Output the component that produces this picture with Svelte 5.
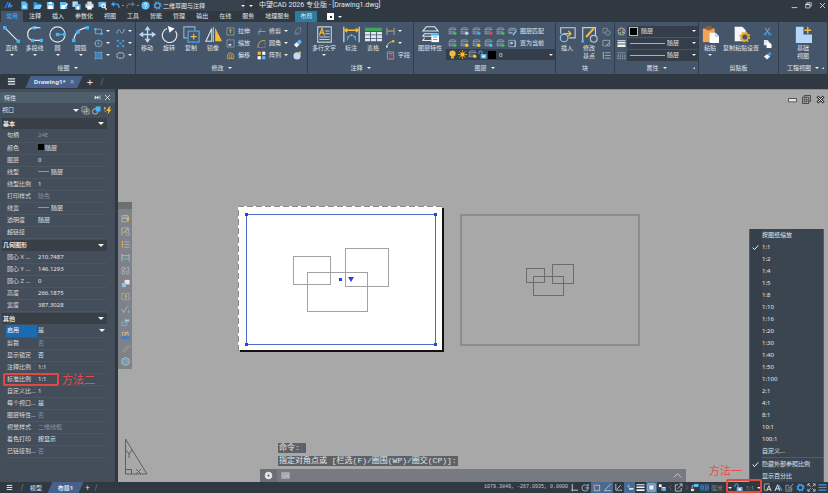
<script>
  let activeTab = $state('常用');
  let scale = $state('1:1');

  const tabs = ['常用', '注释', '插入', '参数化', '视图', '工具', '智能', '管理', '输出', '在线', '服务', '地理服务', '布局'];
  const quickIcons = ['newFile', 'open', 'save', 'saveAs', 'saveAll', 'print', 'preview'];

  const modifyRows = [
    ['stretch', '拉伸', 'trim', '修剪', 'explode'],
    ['scale', '缩放', 'fillet', '圆角', 'eraser'],
    ['offset', '偏移', 'array', '阵列', 'sphere']
  ];
  const layerRows = [
    { colors: ['#49b45c', '#b9d4ee', '#4aa3e8', '#e0484d', '#49b45c', '#8fc4f2'], icon: 'layerMatch', label: '图层匹配' },
    { colors: ['#49b45c', '#f2c230', '#f2c230', '#5ab4f0', '#49b45c', '#8fc4f2'], icon: 'layerSet', label: '置为当前' }
  ];

  const sections = [
    {
      title: '基本',
      rows: [
        { name: '句柄', value: '24E', dim: true },
        { name: '颜色', value: '随层', mark: 'swatch' },
        { name: '图层', value: '0' },
        { name: '线型', value: '随层', mark: 'line' },
        { name: '线型比例', value: '1' },
        { name: '打印样式', value: '随色', dim: true },
        { name: '线宽', value: '随层', mark: 'line' },
        { name: '透明度', value: '随层' },
        { name: '超链接', value: '' }
      ]
    },
    {
      title: '几何图形',
      rows: [
        { name: '圆心 X ...', value: '210.7487' },
        { name: '圆心 Y ...', value: '146.1293' },
        { name: '圆心 Z ...', value: '0' },
        { name: '高度', value: '266.1875' },
        { name: '宽度', value: '387.3028' }
      ]
    },
    {
      title: '其他',
      rows: [
        { name: '启用', value: '是', selected: true },
        { name: '剪裁', value: '否', dim: true },
        { name: '显示锁定', value: '否' },
        { name: '注释比例', value: '1:1' },
        { name: '标准比例', value: '1:1', note: '方法二' },
        { name: '自定义比...', value: '1' },
        { name: '每个视口...', value: '是' },
        { name: '图层特性...', value: '否', dim: true },
        { name: '视觉样式', value: '二维线框', dim: true },
        { name: '着色打印', value: '按显示' },
        { name: '已链接到...', value: '否', dim: true }
      ]
    }
  ];

  const scales = ['按图纸缩放', '1:1', '1:2', '1:4', '1:5', '1:8', '1:10', '1:16', '1:20', '1:30', '1:40', '1:50', '1:100', '2:1', '4:1', '8:1', '10:1', '100:1', '自定义...'];
  const sideTools = ['layerBulb', 'basePoint', 'listTree', 'dimension', 'blocks', 'copyBlue', 'mirrorBox', 'root', 'windows', 'pdf', 'hatch', 'hexGear'];
  const toggles = [
    { icon: 'ortho', on: false },
    { icon: 'polar', on: false },
    { icon: 'snap', on: true },
    { icon: 'track', on: true },
    { icon: 'ucs', on: false },
    { icon: 'dyn', on: true },
    { icon: 'weight', on: false },
    { icon: 'model', on: true },
    { icon: 'cycle', on: false },
    { icon: 'less', on: false, thin: true },
    { icon: 'external', on: false },
    { icon: 'more', on: false, thin: true },
    { icon: 'quick', on: false }
  ];
  const statusTools = ['annoVis', 'annoAuto', 'workspace', 'gear', 'expand', 'menuBlue'];

  const W = '#dfe6ee';
  const B = '#42b4f5';
  const Y = '#f5bb35';
  const line = (d, c = W, w = 1.6) => `<path d="${d}" fill="none" stroke="${c}" stroke-width="${w}"/>`;
  const fill = (d, c = W) => `<path d="${d}" fill="${c}"/>`;
  const dot = (x, y, c = B, s = 4) => `<rect x="${x - s / 2}" y="${y - s / 2}" width="${s}" height="${s}" fill="${c}"/>`;
  const ring = (x, y, r, c = W, w = 1.6) => `<circle cx="${x}" cy="${y}" r="${r}" fill="none" stroke="${c}" stroke-width="${w}"/>`;
  const disc = (x, y, r, c = W) => `<circle cx="${x}" cy="${y}" r="${r}" fill="${c}"/>`;
  const gear = (x, y, r, c) =>
    `<circle cx="${x}" cy="${y}" r="${r}" fill="none" stroke="${c}" stroke-width="${r * 0.5}"/>` +
    `<circle cx="${x}" cy="${y}" r="${r * 1.38}" fill="none" stroke="${c}" stroke-width="${r * 0.5}" stroke-dasharray="${r * 0.54} ${r * 0.54}"/>`;
  const stack = (c) => line('M5 2h10l3 4H2zM3 8l-1 3h12M3 12l-1 3h9', '#aab9c9', 1.5) + disc(15, 14, 4, c);

  const icons = {
    logo: fill('M1 16L7 2l3 1-6 13z', '#2f7bea') + line('M9 15l4-11 1 9 5-3', '#3f9cf5', 2.4),
    newFile: fill('M3 1h9l5 5v13H3z', '#5db9f5') + line('M6 11h8M6 15h8', '#fff', 2),
    open: fill('M1 3h7l2 3h8v4H5L1 17z', '#2d93e0') + fill('M5 9h15l-4 9H1z', '#7bcbfb'),
    save: fill('M2 2h13l3 3v13H2z', '#5db9f5') + fill('M5 10h10v8H5z', '#fff') + fill('M6 2h7v5H6z', '#e5f3fd'),
    saveAs: fill('M2 2h13l3 3v13H2z', '#5db9f5') + fill('M5 9h8v9H5z', '#fff') + line('M10 15l9-9', '#fff', 3),
    saveAll: fill('M1 1h12v12H1z', '#b9dcf5') + fill('M7 7h12v12H7z', '#5db9f5') + fill('M10 12h6v7h-6z', '#fff'),
    print: fill('M5 1h10v5H5zM1 6h18v9H1z', '#cfdbe6') + fill('M5 11h10v8H5z', '#fff') + line('M4 8h3', '#3f9cf5', 2),
    preview: fill('M1 2h17v11H1z', '#5db9f5') + ring(12, 11, 4, '#fff', 2.4) + line('M15 14l4 5', '#fff', 2.6),
    undo: line('M4 7h8q6 0 6 8', '#42a5f5', 3) + fill('M0 7l7-6v12z', '#42a5f5'),
    redo: line('M16 7H8q-6 0-6 8', '#68737e', 2.4) + fill('M20 7l-7-6v12z', '#68737e'),
    help: disc(10, 10, 9, '#5db9f5') + line('M7 8q0-3 3-3t3 3q0 2-3 3v2M10 15v2', '#fff', 2),
    gear: gear(10, 10, 5.5, '#42a5f5'),
    minimize: line('M2 16h16', W, 2.4),
    restore: line('M5 6V2h13v10h-4M2 6h12v11H2z', W, 2) + fill('M2 6h12v3H2z'),
    close: line('M3 3l14 14M17 3L3 17', W, 2.4),
    burger: line('M2 4h16M2 10h16M2 16h16', W, 2.8),
    menuBlue: line('M1 4h18M1 10h18M1 16h18', '#3d9be8', 2.6),

    line: line('M2 2l16 16', W, 1.4) + dot(2, 2) + dot(18, 18),
    polyline: line('M9 2Q2 3 2 10t8 7h8', W, 1.4) + dot(10, 2) + dot(8, 17) + dot(18, 17) + line('M10 2h7', W, 1.4),
    circle: ring(10, 10, 9, W, 1.3) + line('M10 10h9', B, 1.5) + dot(10, 10) + dot(18.5, 10),
    arc: line('M2 18Q3 4 18 2', W, 1.4) + dot(2, 17) + dot(7, 7) + dot(18, 2),
    rect: line('M3 5h14v10H3z', '#b6c4d2', 1.4) + dot(3, 5, B, 5) + dot(17, 15, B, 5),
    ellipse: `<ellipse cx="10" cy="10" rx="8" ry="7" fill="none" stroke="#b6c4d2" stroke-width="1.5"/>` + dot(10, 10) + dot(3, 10, B, 3) + dot(10, 3, B, 3),
    hatchFill: `<rect x="3" y="3" width="14" height="14" fill="#3c84bd"/>` + line('M1 3h18M1 17h18M3 1v18M17 1v18', '#7fa9cf', 1.4),
    spline: line('M2 12Q6 1 10 10t8-3', '#9fc3e2', 1.6) + dot(2, 13, B, 3) + dot(18, 6, B, 3),
    points: dot(4, 4) + dot(16, 4) + dot(10, 10) + dot(4, 16) + dot(16, 16) + line('M4 4l12 12M16 4L4 16', '#3d86ba', 1),
    cloud: `<rect x="2" y="4" width="16" height="12" rx="5" fill="none" stroke="${W}" stroke-width="1.8" stroke-dasharray="5 1"/>`,

    move: line('M10 2v16M2 10h16', '#b9d7f5', 1.6) + fill('M10 0l3.500 5h-7zM10 20l3.500-5h-7zM0 10l5-3.500v7zM20 10l-5-3.500v7z', '#b9d7f5'),
    rotate: line('M7 3A8.500 8.500 0 1 0 17 6', W, 1.4) + fill('M8 0l8 3-6 5z', '#fff'),
    copy: line('M5 14H1V1h13v4', '#9fb0c1', 1.3) + line('M6 6h13v13H6z', '#4aa3e8', 1.5) + line('M12.500 9v7M9 12.500h7', Y, 1.4),
    mirror: line('M8 3v15H1z', W, 1.3) + fill('M12 2v16h8z', Y) + line('M10 1v18', '#b6c4d2', 1),
    stretch: line('M2 2h16v16H2z', '#9fb0c1', 1.4) + line('M10 14V6M7 8l3-3 3 3', Y, 1.8),
    scale: line('M2 2h16v16H2z', '#9fb0c1', 1.4) + line('M7 13h6M10 10v6', W, 1.4) + dot(7, 13, '#fff', 3),
    offset: line('M3 17V12Q3 4 10 4t7 8v5z', Y, 1.5) + line('M7 14V12q0-4 3-4t3 4v2z', Y, 1.4),
    trim: line('M3 17L9 3M2 10h17', '#9fb0c1', 1.6) + line('M10 10h8', '#be9a58', 1.4),
    fillet: line('M2 19Q2 3 18 3', Y, 1.8) + line('M2 19h16V3', '#8d9cac', 1.1),
    array: dot(5, 5, Y, 7) + dot(15, 5, '#fff', 7) + dot(5, 15, '#fff', 7) + dot(15, 15, '#5db9f5', 7),
    explode: line('M6 8l4-6h7v7l-4 7H4z', '#7b93aa', 1.6) + dot(9, 14, '#5d7f9f', 4),
    eraser: fill('M2 13l6-6 6 6-6 6z', '#f2f6fa') + fill('M8 7l5-5q3-1 5 2t-1 6l-3 3z', '#5db9f5'),
    sphere: disc(9, 11, 8, '#c9d8ef') + dot(15, 4, Y, 5),

    mtext: line('M2 1h16v18H2z', '#c4cfda', 1.3) + `<path d="M4 11l3-8 3 8M5 8h4" fill="none" stroke="${Y}" stroke-width="1.5"/>` + line('M11 6h5M11 9h5M4 13h12M4 16h12', '#c4cfda', 1.2),
    dim: line('M1 1v18M19 1v18', W, 1.3) + line('M2 5h16M5 3L2 5l3 2M15 3l3 2-3 2', Y, 1.6) + line('M5 17q1-6 5-6t5 6M10 9v3M5 12l2 2M15 12l-2 2', B, 1.2),
    table: fill('M0 2h20v4H0z', '#3fa55c') + fill('M0 7h6v3H0zM7 7h6v3H7zM14 7h6v3h-6zM0 11h6v3H0zM7 11h6v3H7zM14 11h6v3h-6zM0 15h6v3H0zM7 15h6v3H7zM14 15h6v3h-6z'),
    dimSmall: line('M2 2v16M18 2v16', '#b6c4d2', 1.6) + line('M3 9h14', Y, 2),
    leader: line('M1 18Q5 6 14 6', W, 1.6) + dot(16, 5, Y, 5) + dot(2, 17, W, 4),
    field: line('M3 2h14v16H3z', '#b6c4d2', 1.4) + line('M6 6h8', '#b6c4d2', 1.4) + line('M9 9h8v8H9z', '#c8606a', 1.6),

    layerProps: line('M5 1h10l4 5H1zM3 9l-2 3h12M3 14l-2 3h10M3 9h14', W, 1.2) + fill('M11 9h9v10h-9z', '#fff') + line('M11 10h9', B, 2.4) + line('M13 13h5M13 16h5', '#5aa7df', 1.2),
    layerMatch: line('M4 3h12l3 4H1zM2 9l-1 3h9M2 14h8', '#b6c4d2', 1.5) + line('M18 9l-7 9', '#8fd0ff', 3),
    layerSet: line('M2 3h14v14H2z', '#b6c4d2', 1.5) + disc(8, 9, 3, '#8fd0ff') + line('M16 4v14', W, 1.6),
    bulb: disc(10, 8, 7, Y) + fill('M7 14h6v5H7z', '#e4b545'),
    sun: disc(10, 10, 5, Y) + line('M10 0v4M10 16v4M0 10h4M16 10h4M3 3l3 3M14 14l3 3M17 3l-3 3M6 14l-3 3', Y, 1.8),
    unlock: line('M2 9V5q0-3 3.500-3T9 5v5', '#5db9f5', 2) + fill('M6 9h13v10H6z', '#5db9f5') + fill('M10 12h5v4h-5z', '#fff'),

    insert: line('M2 9V2h17v12h-7', '#c4cfda', 1.3) + ring(6, 14, 4.5, '#8ec8f3', 1.4) + line('M5 9h9M11 6l3 3-3 3', Y, 1.6),
    basePoint: line('M2 18V2h15v9', '#c4cfda', 1.4) + line('M6 13l9-10', Y, 2.4) + ring(15, 15, 4, '#b6c4d2', 1.4) + dot(2, 18, B, 3),
    blockA: line('M2 3h10v5M2 3v10h6', '#8d9cac', 1.5) + ring(13, 13, 5, '#9fb0c1', 1.5),
    blockB: line('M2 3h15v12H9M2 3v12h3', '#b6c4d2', 1.5) + line('M7 17l9-9', Y, 2.2),
    listTree: line('M7 4h12M7 10h12M7 16h12', '#b6c4d2', 1.6) + line('M3 2v15M2 4h2M2 10h2M2 16h2', Y, 1.8),
    palette: ring(10, 10, 8, '#a9b6c2', 2) + dot(7, 7, '#e0484d', 4) + dot(13, 7, '#49b45c', 4) + dot(7, 13, B, 4) + dot(13, 12, Y, 4),
    weights: fill('M1 2h18v2H1zM1 6h18v4H1zM1 12h18v6H1z', '#f0f3f6'),
    linetypes: line('M1 4h18', '#a9b6c2', 1.4) + `<path d="M1 9h18M1 13h18M1 17h18" stroke="#a9b6c2" stroke-width="2" stroke-dasharray="3 2" fill="none"/>`,

    paste: fill('M1 3h14v16H1z', '#f0a457') + fill('M5 0h6v5H5z', '#8e5f3b') + fill('M9 8h7l4 4v8H9z', '#fff') + fill('M15 8l5 5h-5z', '#b8d8f2'),
    pasteSet: fill('M2 1h9l4 4v13H2z', '#f4f7fa') + disc(14, 13, 5, '#45566b') + gear(14, 13, 4, '#e9ae2f'),
    cut: line('M5 2l8 12M15 2L7 14', '#7fc0f0', 2) + ring(5, 16, 2.5, '#42a5f5', 2) + ring(15, 16, 2.5, '#42a5f5', 2),
    copySmall: fill('M2 2h8l3 3v9H2z', '#dfe6ee') + fill('M8 8h7l4 4v8H8z', '#fff'),
    brush: fill('M2 12l7-5 7 5-7 7z', '#f2f6fa') + fill('M10 6l5-4 4 4-4 5z', '#3d9be8'),
    baseView: fill('M1 1h9v9h10v10H1z', '#b5d6fa') + line('M15 1v8M11 5h8', Y, 1.6),

    pin: fill('M2 4v12l7-6zM9 4v12l6-6z') + line('M17 4v12', W, 2),
    multi: line('M2 2h11v11H2z', '#b6c4d2', 1.5) + line('M7 7h11v11H7z', '#b6c4d2', 1.5) + line('M12 9v7M9 12h7', Y, 1.6),
    selectObj: ring(7, 12, 6, '#d9e2ea', 1.6) + fill('M8 1h11v11H8z', '#4db2f6'),
    flash: line('M2 5h5M4 2v6M3 10l4 4', '#c4cfda', 1.6) + fill('M14 1L7 11h5l-2 8 9-11h-5l3-7z', Y),

    layerBulb: line('M3 3h12l2 4H1zM2 10h9M2 10v7h10', '#c4c9ce', 1.5) + disc(15, 11, 3.5, Y) + dot(15, 16, Y, 3),
    dimension: line('M2 2v16M18 2v16', '#c4c9ce', 1.6) + line('M2 6h16', Y, 2) + line('M2 13h16', '#69bcf0', 2),
    blocks: line('M2 3h6v6H2zM2 12h6v6H2zM12 11h6v7h-6z', '#b4bac0', 1.5) + line('M7 7l10-5v8', '#b4bac0', 1.5),
    copyBlue: fill('M8 2h11v10H8z', '#e6eaee') + fill('M2 9h9v9H2z', '#91c5e6'),
    mirrorBox: line('M7 3H2v14h5M13 3h5v14h-5M10 1v18', '#b4bac0', 1.5) + dot(11, 10, '#c7ab58', 5),
    root: line('M2 9l4 8L14 3', '#a6ced8', 1.6) + dot(15, 4, '#58a9d8', 3) + line('M17 11v7', '#a6ced8', 1.4),
    windows: line('M2 9h11v8H2z', '#8fb9d8', 1.6) + fill('M8 2h11v7H8z', '#63aee0') + line('M9 6h9', '#dfe6ee', 1.4),
    pdf: line('M3 11V3h13v8', '#c4c9ce', 1.5) + line('M7 10l8-8', Y, 2.4) + fill('M1 12h18v6H1z', '#3a78cf'),
    hatch: line('M2 17L16 3', '#aeb4ba', 1.4) + line('M6 18L19 5', '#b9ae82', 1.6),
    hexGear: line('M10 1l8 4.500v9L10 19l-8-4.500v-9z', '#c3d5e0', 1.8) + ring(10, 10, 4, '#72b5dc', 2.8),
    console: fill('M1 3h18v14H1z', '#b9bdc2') + line('M3 7h14M4 10l3 2-3 2M9 14h6', '#80858b', 1.3),

    ortho: line('M5 2v14h13', W, 1.8) + line('M2 16h3M5 16v3', W, 1.2),
    polar: ring(9, 11, 7, '#c4cfda', 1.6) + line('M9 11h9', '#c4cfda', 1.6) + dot(16, 4, '#42a5f5', 4),
    snap: line('M5 5h12v12H5z', W, 1.4) + dot(5, 5, '#e0606a', 5),
    track: line('M17 2L3 17h15', '#cfe0ef', 1.5),
    ucs: line('M4 2v14h14', W, 1.6) + line('M6 14l9-9', Y, 2.2),
    dyn: line('M8 3v8M4 7h8', '#69bcf0', 1.8) + fill('M9 11h10v4H9z', '#cfe5f7'),
    weight: fill('M1 3h18v2H1zM1 8h18v3H1zM1 14h18v4H1z', '#f0f3f6'),
    model: line('M2 2h16v16H2z', W, 1.6) + fill('M5 5h10v10H5z', '#dceefb'),
    cycle: dot(5, 6, '#fff', 6) + fill('M8 9h9v2h-7v6H8z') + dot(14, 14, '#5db9f5', 7),
    less: line('M12 5l-5 5 5 5', '#6b7682', 1.6),
    more: line('M8 5l5 5-5 5', '#6b7682', 1.6),
    external: line('M9 4H3v14h13v-7', W, 1.6) + line('M8 13l9-10M12 2h6v6', '#e5dcc0', 1.8),
    quick: fill('M9 2h10v7H9z', '#5db9f5') + fill('M2 13h7v5H2z') + line('M5 12V6h4', W, 1.6),
    units: line('M1 4h18v12H1z', '#3b86c4', 1.6) + line('M4 7h4v6H4zM12 7h4v6h-4z', '#4aa3e8', 1.6),
    annoVis: line('M3 2h12M3 2v14h5', '#a9b6c2', 1.8) + line('M8 18l5-12 5 12M9 14h8', '#dfe6ee', 2),
    annoAuto: line('M2 18l6-14 5 14M4 13h8', '#e5f1fb', 2) + line('M10 4l8 13', '#42a5f5', 2.4),
    workspace: line('M15 10v8H2V5h7', '#a9b6c2', 1.6) + ring(10, 12, 3, '#a9b6c2', 1.6) + line('M12 9l6-7', '#a9b6c2', 2),
    expand: line('M2 7V2h5M13 2h5v5M18 13v5h-5M7 18H2v-5M3 3l5 5M17 3l-5 5M17 17l-5-5M3 17l5-5', W, 1.6),
    gearGrey: ring(10, 10, 5, '#e4e6e8', 5) + ring(10, 10, 7.5, '#e4e6e8', 2),
    chevron: line('M2 14l8-8 8 8', '#c9ccd0', 2.2),
    check: line('M2 10l5 6L18 4', '#f2f5f8', 2.8),
    paneMin: line('M1 8h18v7H1z', '#3f3f3f', 2) + fill('M2 9h16v5H2z', '#e8e8e8'),
    paneRestore: line('M5 5V1h14v13h-4M1 5h14v14H1z', '#3f3f3f', 2) + line('M5 9h6v6H5z', '#3f3f3f', 2),
    paneClose: line('M3 3l14 14M17 3L3 17', '#2e2e2e', 6) + line('M4 4l12 12M16 4L4 16', '#f4f4f4', 2)
  };
</script>

{#snippet icon(name, size = 'small')}
  <svg class="icon {size}" viewBox="0 0 20 20" aria-hidden="true">{@html icons[name]}</svg>
{/snippet}

{#snippet big(name, label, width = '', arrow = false)}
  <button class="big {width}">
    {@render icon(name, 'large')}
    <span>{label}</span>
    {#if arrow}<i class="caret"></i>{/if}
  </button>
{/snippet}

{#snippet tool(name, label = '', arrow = true)}
  <button class="tool" aria-label={label || name}>
    {@render icon(name)}
    {#if label}<span>{label}</span>{/if}
    {#if arrow}<i class="caret"></i>{/if}
  </button>
{/snippet}

<div class="app">
  <header class="titlebar">
    <span class="logo">{@render icon('logo')}</span>
    {#each quickIcons as name}
      <button class="quick" aria-label={name}>{@render icon(name)}</button>
    {/each}
    <button class="quick" aria-label="undo">{@render icon('undo')}</button>
    <i class="caret faint"></i>
    <button class="quick" aria-label="redo">{@render icon('redo')}</button>
    <i class="caret faint"></i>
    <button class="quick" aria-label="help">{@render icon('help')}</button>
    <div class="workspace">
      {@render icon('gear')}
      <select aria-label="工作空间"><option>二维草图与注释</option></select>
      <i class="caret"></i>
    </div>
    <i class="caret customize"></i>
    <h1>中望CAD 2026 专业版 - [Drawing1.dwg]</h1>
    <div class="window-buttons">
      <button aria-label="最小化">{@render icon('minimize', 'tiny')}</button>
      <button aria-label="还原">{@render icon('restore', 'tiny')}</button>
      <button aria-label="关闭">{@render icon('close', 'tiny')}</button>
    </div>
  </header>

  <nav class="tabs">
    {#each tabs as tab}
      <button class:active={activeTab === tab} class:context={tab === '布局'} onclick={() => (activeTab = tab)}>{tab}</button>
    {/each}
    <span class="panel-toggle"><i class="caret up"></i></span>
    <i class="caret"></i>
  </nav>

  <div class="ribbon">
    <section>
      <div class="body">
        {@render big('line', '直线', '', true)}
        {@render big('polyline', '多段线', '', true)}
        {@render big('circle', '圆', '', true)}
        {@render big('arc', '圆弧', '', true)}
        <div class="col wide">{@render tool('rect')}{@render tool('ellipse')}{@render tool('hatchFill')}</div>
        <div class="col wide">{@render tool('spline')}{@render tool('points')}{@render tool('cloud')}</div>
      </div>
      <footer>绘图 <i class="caret"></i></footer>
    </section>

    <section>
      <div class="body">
        {@render big('move', '移动')}
        {@render big('rotate', '旋转')}
        {@render big('copy', '复制')}
        {@render big('mirror', '镜像')}
        <div class="modify">
          {#each modifyRows as [a, aLabel, b, bLabel, c]}
            {@render tool(a, aLabel, false)}
            {@render tool(b, bLabel)}
            {@render tool(c, '', false)}
          {/each}
        </div>
      </div>
      <footer>修改 <i class="caret"></i></footer>
    </section>

    <section>
      <div class="body">
        {@render big('mtext', '多行文字', 'w32', true)}
        {@render big('dim', '标注')}
        {@render big('table', '表格')}
        <div class="col">{@render tool('dimSmall')}{@render tool('leader')}{@render tool('field', '字段', false)}</div>
      </div>
      <footer>注释 <i class="caret"></i></footer>
    </section>

    <section>
      <div class="body">
        {@render big('layerProps', '图层特性', 'w32')}
        <div class="layers">
          {#each layerRows as row}
            <div class="layer-row">
              {#each row.colors.slice(0, 5) as color}
                <button class="tool" aria-label="图层工具">
                  <svg class="icon small" viewBox="0 0 20 20" aria-hidden="true">{@html stack(color)}</svg>
                </button>
              {/each}
              {@render tool(row.icon, row.label, false)}
            </div>
          {/each}
          <div class="combo">
            {@render icon('bulb')}
            {@render icon('sun')}
            <svg class="icon small" viewBox="0 0 20 20" aria-hidden="true">{@html stack('#f2c230')}</svg>
            {@render icon('unlock')}
            <span class="swatch"></span>
            <select aria-label="图层"><option>0</option></select>
            <i class="caret"></i>
          </div>
        </div>
      </div>
      <footer>图层 <i class="caret"></i></footer>
    </section>

    <section>
      <div class="body">
        {@render big('insert', '插入')}
        {@render big('basePoint', '修改基点', 'wrap')}
        <div class="col">{@render tool('blockA', '', false)}{@render tool('blockB', '', false)}{@render tool('listTree', '', false)}</div>
      </div>
      <footer>块</footer>
    </section>

    <section>
      <div class="body">
        <div class="props">
          <div class="prop-row">
            {@render icon('palette')}
            <div class="combo"><span class="swatch outlined"></span><select aria-label="颜色"><option>随层</option></select><i class="caret"></i></div>
          </div>
          <div class="prop-row">
            {@render icon('weights')}
            <div class="combo"><span class="rule"></span><select class="fit" aria-label="线宽"><option>随层</option></select><i class="caret"></i></div>
          </div>
          <div class="prop-row">
            {@render icon('linetypes')}
            <div class="combo"><span class="rule"></span><select class="fit" aria-label="线型"><option>随层</option></select><i class="caret"></i></div>
          </div>
        </div>
      </div>
      <footer>属性 <i class="caret"></i><i class="launcher"></i></footer>
    </section>

    <section>
      <div class="body">
        {@render big('paste', '粘贴', '', true)}
        {@render big('pasteSet', '复制粘贴设置', 'w40')}
        <div class="col">{@render tool('cut', '', false)}{@render tool('copySmall', '', false)}{@render tool('brush', '', false)}</div>
      </div>
      <footer>剪贴板</footer>
    </section>

    <section>
      <div class="body center">{@render big('baseView', '基础视图', 'wrap')}</div>
      <footer>工程视图 <i class="caret"></i><i class="launcher"></i></footer>
    </section>
  </div>

  <div class="doc-tabs">
    <button class="menu" aria-label="菜单">{@render icon('burger')}</button>
    <button class="slant doc"><span>Drawing1*</span><span class="x">×</span></button>
    <button class="plus" aria-label="新建">+</button>
    <span class="slash">/</span>
  </div>

  <main>
    <aside>
      <div class="aside-title">
        <span>特性</span>
        <button aria-label="自动隐藏">{@render icon('pin', 'tiny')}</button>
        <button aria-label="关闭">{@render icon('close', 'tiny')}</button>
      </div>
      <div class="picker">
        <select aria-label="对象"><option>视口</option></select>
        <i class="caret large"></i>
        <button aria-label="切换">{@render icon('multi')}</button>
        <button aria-label="选择对象">{@render icon('selectObj')}</button>
        <button aria-label="快速选择">{@render icon('flash')}</button>
      </div>
      {#each sections as section}
        <button class="section-head">{section.title}<i class="caret large"></i></button>
        <table>
          <tbody>
            {#each section.rows as row}
              <tr class:dim={row.dim} class:selected={row.selected}>
                <th scope="row">{row.name}</th>
                <td>
                  {#if row.mark}<span class="mark {row.mark}"></span>{/if}{row.value}
                  {#if row.selected}<i class="caret large drop"></i>{/if}
                  {#if row.note}
                    <span class="frame"></span>
                    <span class="note">{row.note}</span>
                  {/if}
                </td>
              </tr>
            {/each}
          </tbody>
        </table>
      {/each}
    </aside>

    <div class="canvas">
      <svg class="drawing" aria-hidden="true">
        <rect x="122" y="119" width="204" height="144" fill="#111" />
        <rect x="120" y="117" width="204" height="144" fill="#fff" />
        <path d="M120.500 262v-144.500h204" class="dash" />
        <rect x="128.500" y="125.500" width="189" height="130" class="viewport" />
        <g fill="#1c47e0">
          <rect x="127" y="124" width="3" height="3" />
          <rect x="316" y="124" width="3" height="3" />
          <rect x="127" y="254" width="3" height="3" />
          <rect x="316" y="254" width="3" height="3" />
          <rect x="221" y="189" width="3" height="3" />
          <path d="M230 188h6l-3 5z" />
        </g>
        <g class="shape pale">
          <rect x="175.500" y="167.500" width="37" height="28" />
          <rect x="227.500" y="159.500" width="43" height="38" />
          <rect x="189.500" y="183.500" width="60" height="39" />
        </g>
        <rect x="343" y="126" width="178" height="130" class="outer" />
        <g class="shape">
          <rect x="408.500" y="179.500" width="18" height="14" />
          <rect x="434.500" y="175.500" width="21" height="19" />
          <rect x="415.500" y="187.500" width="30" height="19" />
        </g>
        <g class="ucs">
          <path d="M7.500 350v35h21.500zM7.500 380.500h6v4.500M18 380l5 5M23 380l-5 5M8 361l3 4 3-4M11 365v4" />
        </g>
      </svg>

      <div class="pane-buttons">
        <button aria-label="最小化视口">{@render icon('paneMin')}</button>
        <button aria-label="还原视口">{@render icon('paneRestore')}</button>
        <button aria-label="关闭视口">{@render icon('paneClose')}</button>
      </div>

      <div class="side-tools">
        {#each sideTools as name}
          <button aria-label={name}>{@render icon(name)}</button>
        {/each}
      </div>

      <div class="command">
        <p>命令:&nbsp;</p>
        <p>指定对角点或 [栏选(F)/圈围(WP)/圈交(CP)]:</p>
        <div class="command-bar">
          <button class="cog" aria-label="设置">{@render icon('gearGrey')}</button>
          {@render icon('console')}
          <input aria-label="命令行" />
          <button aria-label="展开">{@render icon('chevron')}</button>
        </div>
      </div>

      <div class="scale-menu" role="menu">
        {#each scales as item}
          <button role="menuitemradio" aria-checked={scale === item} onclick={() => (scale = item)}>
            <span class="tick">{#if scale === item}{@render icon('check', 'tiny')}{/if}</span>{item}
          </button>
        {/each}
        <hr />
        <button role="menuitemcheckbox" aria-checked="true"><span class="tick">{@render icon('check', 'tiny')}</span>隐藏外部参照比例</button>
        <button role="menuitemcheckbox" aria-checked="false"><span class="tick"></span>显示百分比</button>
      </div>
    </div>
  </main>

  <footer class="status">
    <button class="menu" aria-label="布局菜单">{@render icon('burger', 'tiny')}</button>
    <span class="slash">/</span>
    <button class="sheet">模型</button>
    <button class="slant sheet current"><span>布局1</span></button>
    <button class="plus" aria-label="新建布局">+</button>
    <span class="slash">/</span>
    <span class="coords">1079.3849, -267.0935, 0.0000</span>
    {#each toggles as toggle}
      <button class="toggle" class:on={toggle.on} class:thin={toggle.thin} aria-label={toggle.icon}>{@render icon(toggle.icon)}</button>
    {/each}
    <button class="units">{@render icon('units')}<span>毫米</span></button>
    <div class="scale">
      <i class="caret"></i>
      <button aria-label="锁定视口">{@render icon('unlock')}</button>
      <button class="value">{scale}</button>
      <i class="caret"></i>
      <span class="frame"></span>
      <span class="note">方法一</span>
    </div>
    {#each statusTools as name}
      <button class="toggle" aria-label={name}>{@render icon(name)}</button>
    {/each}
  </footer>
</div>

<style>
  :global(body) {
    background: #303942;
  }

  .app {
    display: flex;
    flex-direction: column;
    height: 100vh;
    overflow: hidden;
    background: #303942;
    color: #e0e5ea;
    font: 6px/12px 'Noto Sans', 'Noto Sans CJK SC', sans-serif;
    white-space: nowrap;
  }

  button,
  select,
  input {
    margin: 0;
    padding: 0;
    border: 0;
    background: none;
    color: inherit;
    font: inherit;
    appearance: none;
    min-width: 0;
  }

  button {
    cursor: pointer;
  }

  .icon {
    display: block;
    flex: none;
    width: 9px;
    height: 9px;
  }

  .icon.large {
    width: 17px;
    height: 17px;
  }

  .icon.tiny {
    width: 7px;
    height: 7px;
  }

  .caret {
    flex: none;
    width: 0;
    height: 0;
    border: 2px solid transparent;
    border-top-color: #eef1f4;
    border-bottom-width: 0;
  }

  .caret.large {
    border-width: 3px;
    border-bottom-width: 0;
  }

  .caret.faint {
    border-width: 1px;
  }

  /* title bar */
  .titlebar {
    display: flex;
    align-items: center;
    flex: none;
    height: 11px;
    padding-left: 4px;
  }

  .logo {
    width: 14px;
  }

  .quick {
    display: flex;
    justify-content: center;
    width: 12px;
    margin-right: 1px;
  }

  .workspace {
    display: flex;
    align-items: center;
    width: 92px;
    height: 11px;
    margin-left: 1px;
    background: #38424c;
  }

  .workspace select {
    flex: 1;
    margin-left: 1px;
  }

  .customize {
    margin: 0 6px 0 4px;
  }

  h1 {
    margin: 0;
    font: 400 7px/11px Roboto, 'Noto Sans CJK SC', sans-serif;
  }

  .window-buttons {
    display: flex;
    gap: 7px;
    margin: 0 2px 0 auto;
  }

  /* ribbon tabs */
  .tabs {
    display: flex;
    align-items: center;
    flex: none;
    gap: 1px;
    height: 11px;
    padding-left: 1px;
  }

  .tabs button {
    height: 11px;
    padding: 0 5px;
    line-height: 11px;
  }

  .tabs .active {
    background: #45566b;
    color: #43b0ee;
  }

  .tabs .context {
    background: #2b7d9f;
  }

  .panel-toggle {
    display: grid;
    place-items: center;
    width: 7px;
    height: 7px;
    margin: 0 3px 0 9px;
    background: #fff;
  }

  .panel-toggle .caret {
    border-width: 1px;
    border-color: #333;
  }

  /* ribbon */
  .ribbon {
    display: grid;
    grid-template-columns: 136fr 172fr 106fr 142fr 59fr 84fr 80fr 49fr;
    flex: none;
    background: #45566b;
  }

  section {
    min-width: 0;
    padding-top: 3px;
    border-right: 1px solid #313c49;
  }

  .body {
    display: flex;
    height: 36px;
  }

  .body.center {
    justify-content: center;
  }

  section footer {
    position: relative;
    display: flex;
    align-items: center;
    justify-content: center;
    gap: 4px;
    height: 13px;
  }

  .launcher {
    position: absolute;
    right: 3px;
    bottom: 5px;
    border: 1px solid #dfe6ee;
    border-top-color: transparent;
    border-left-color: transparent;
  }

  .big {
    display: flex;
    flex-direction: column;
    align-items: center;
    flex: none;
    width: 22px;
    padding-top: 1px;
    line-height: 8px;
  }

  section:first-child .big {
    width: 23px;
  }

  .big span {
    margin-top: 1px;
  }

  .big .caret {
    margin-top: 2px;
  }

  .big.w32 {
    width: 32px;
  }

  .big.w40 {
    width: 40px;
  }

  .big.wrap span {
    width: 12px;
    white-space: normal;
  }

  .col {
    display: grid;
    grid-template-rows: repeat(3, 12px);
    margin-left: 2px;
  }

  .col.wide {
    width: 21px;
  }

  .tool {
    display: flex;
    align-items: center;
    gap: 3px;
    height: 12px;
  }

  .modify {
    display: grid;
    grid-template-columns: 31px 36px 10px;
    grid-template-rows: repeat(3, 12px);
    margin-left: 2px;
  }

  .layers {
    flex: 1;
    min-width: 0;
  }

  .layer-row {
    display: flex;
    gap: 3px;
    padding-left: 2px;
  }

  .combo {
    display: flex;
    align-items: center;
    flex: 1;
    gap: 1px;
    min-width: 0;
    height: 11px;
    padding: 0 2px;
    background: #343e4a;
  }

  .combo select {
    flex: 1;
    padding-left: 2px;
  }

  .combo select.fit {
    flex: none;
    width: 24px;
    padding: 0;
  }

  .swatch {
    flex: none;
    width: 8px;
    height: 8px;
    background: #000;
  }

  .swatch.outlined {
    width: 7px;
    height: 7px;
    border: 1px solid #b6bdc4;
  }

  .rule {
    flex: 1;
    height: 1px;
    margin: 0 1px;
    background: #aab3bc;
  }

  .props {
    flex: 1;
    min-width: 0;
    padding-left: 2px;
  }

  .prop-row {
    display: flex;
    align-items: center;
    gap: 1px;
    height: 12px;
  }

  /* document tabs */
  .doc-tabs {
    display: flex;
    align-items: center;
    flex: none;
    height: 15px;
  }

  .doc-tabs .menu {
    width: 22px;
    margin: 0 4px 0 7px;
  }

  .slant {
    position: relative;
    z-index: 0;
    display: flex;
    align-items: center;
    justify-content: center;
    gap: 4px;
    font-weight: 700;
  }

  .slant::before {
    content: '';
    position: absolute;
    inset: 0 2px;
    z-index: -1;
    background: #48608a;
    transform: skewX(-24deg);
  }

  .doc {
    width: 56px;
    height: 12px;
    margin-left: -7px;
  }

  .x {
    color: #aab6c6;
    font-size: 8px;
    font-weight: 400;
  }

  .plus {
    width: 16px;
    font-size: 11px;
  }

  .slash {
    width: 8px;
    color: #66717c;
    font-size: 8px;
    text-align: center;
  }

  main {
    display: flex;
    flex: 1;
    min-height: 0;
  }

  /* properties */
  aside {
    flex: none;
    width: 115px;
    box-sizing: border-box;
    margin-right: 3px;
    padding-top: 3px;
    background: #434e5a;
  }

  .aside-title {
    display: flex;
    align-items: center;
    gap: 3px;
    height: 11px;
    padding: 0 4px;
    background: #4e5f6c;
  }

  .aside-title span {
    flex: 1;
  }

  .picker {
    display: flex;
    align-items: center;
    gap: 2px;
    height: 14px;
    padding: 0 3px 0 2px;
  }

  .picker select {
    flex: 1;
  }

  .section-head {
    display: flex;
    align-items: center;
    justify-content: space-between;
    width: 105px;
    height: 11px;
    margin: 1px 0 1px 2px;
    padding: 0 3px 0 1px;
    background: #383f46;
    font-weight: 700;
  }

  table {
    width: 101px;
    margin-left: 6px;
    border-collapse: collapse;
    table-layout: fixed;
  }

  tr {
    height: 12px;
  }

  th,
  td {
    position: relative;
    height: 11px;
    padding: 0 0 0 1px;
    border-bottom: 1px solid #4a5662;
    line-height: 11px;
    text-align: left;
  }

  th {
    width: 30px;
    font-weight: 400;
    color: #d6dbe0;
  }

  .dim td {
    color: #87919b;
  }

  .selected th {
    background: #1b6bb0;
    color: #fff;
  }

  .mark {
    display: inline-block;
  }

  .mark.swatch {
    width: 6px;
    height: 6px;
    margin-right: 1px;
  }

  .mark.line {
    width: 11px;
    height: 1px;
    margin-right: 2px;
    vertical-align: 2px;
    background: #8d97a1;
  }

  .drop {
    position: absolute;
    top: 4px;
    right: 2px;
  }

  .frame {
    position: absolute;
    border: 2px solid #e2493f;
    border-radius: 2px;
    pointer-events: none;
  }

  td .frame {
    inset: -1px auto -1px -34px;
    width: 52px;
  }

  .note {
    position: absolute;
    color: #ee4b3e;
    font-size: 11px;
  }

  td .note {
    left: 25px;
  }

  /* drawing area */
  .canvas {
    position: relative;
    flex: 1;
    min-width: 0;
    background: #a8a8a8;
    border-top: 1px solid #8b8b8f;
  }

  .drawing {
    position: absolute;
    top: -1px;
    width: 100%;
    height: 100%;
    fill: none;
  }

  .dash {
    stroke: #8a8a8a;
    stroke-width: 1;
    stroke-dasharray: 6 3;
  }

  .viewport {
    stroke: #4c6bc9;
  }

  .shape {
    stroke: #6c6c6c;
  }

  .shape.pale {
    stroke: #a2a2a2;
  }

  .outer {
    stroke: #8d8d8d;
    stroke-width: 2;
  }

  .ucs {
    stroke: #5e5e5e;
  }

  .pane-buttons {
    position: absolute;
    top: 5px;
    right: 3px;
    display: flex;
    gap: 5px;
  }

  .side-tools {
    position: absolute;
    top: 112px;
    left: 0;
    width: 14px;
    padding: 3px 0 1px;
    border-top: 7px solid #696c72;
    background: #7e8188;
    opacity: 0.95;
  }

  .side-tools button {
    display: grid;
    place-items: center;
    width: 14px;
    height: 13px;
  }

  .command {
    position: absolute;
    right: 142px;
    bottom: 0;
    left: 142px;
  }

  .command p {
    width: max-content;
    margin: 0 0 3px 18px;
    padding: 0 1px;
    background: #5d6269;
    color: #e2e5e8;
    font: 8px/10px 'Liberation Mono', 'Noto Sans CJK SC', monospace;
  }

  .command-bar {
    display: flex;
    align-items: center;
    gap: 4px;
    height: 13px;
    padding-right: 4px;
    background: #777a82;
  }

  .command-bar input {
    flex: 1;
  }

  .cog {
    display: grid;
    place-items: center;
    width: 17px;
    height: 13px;
    background: #6a6e75;
  }

  .scale-menu {
    position: absolute;
    right: 4px;
    bottom: 0;
    width: 73px;
    border: 1px solid #535c65;
    border-width: 0 1px;
    background: linear-gradient(90deg, #35404a 12px, #3b454f 12px);
  }

  .scale-menu button {
    display: flex;
    align-items: center;
    width: 100%;
    height: 12px;
  }

  .tick {
    width: 10px;
    padding-left: 2px;
  }

  hr {
    height: 1px;
    margin: 0 0 0 12px;
    border: 0;
    background: #525c66;
  }

  /* status bar */
  .status {
    display: flex;
    align-items: center;
    flex: none;
    height: 11px;
  }

  .status .menu {
    width: 12px;
    margin-left: 6px;
  }

  .sheet {
    width: 20px;
  }

  .sheet.current {
    width: 35px;
    height: 11px;
    margin-left: 2px;
  }

  .status .plus {
    width: 9px;
    font-size: 8px;
  }

  .coords {
    margin: 0 1px 0 auto;
    color: #c5ccd3;
    font: 5px/11px 'Liberation Mono', monospace;
  }

  .toggle {
    display: grid;
    place-items: center;
    width: 11px;
    height: 11px;
  }

  .toggle.thin {
    width: 5px;
    justify-content: center;
  }

  .toggle.on {
    background: #4b6a8d;
  }

  .units {
    display: flex;
    align-items: center;
    gap: 2px;
    margin-right: 4px;
    color: #7e8994;
  }

  .scale {
    position: relative;
    display: flex;
    align-items: center;
    gap: 2px;
    height: 11px;
    padding: 0 1px;
  }

  .scale .value {
    width: 10px;
    color: #87919b;
  }

  .scale .frame {
    inset: -3px 0 0 -1px;
  }

  .scale .note {
    bottom: 16px;
    left: -18px;
  }
</style>
